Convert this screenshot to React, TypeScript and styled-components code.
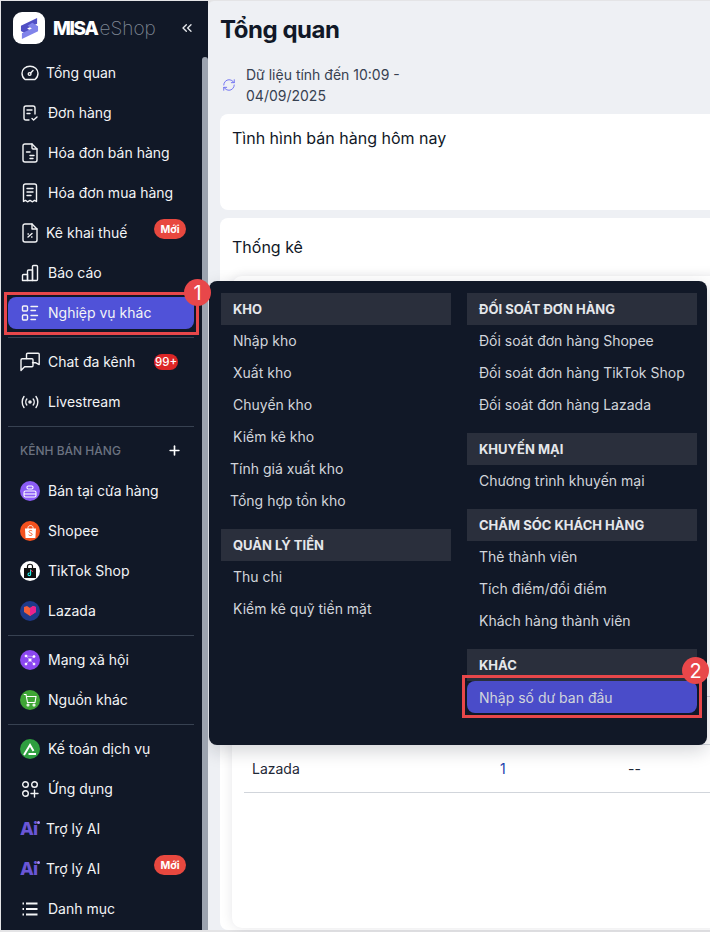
import React from 'react';
import styled, { createGlobalStyle } from 'styled-components';
import { ChevronsLeft, Plus, RefreshCw } from 'lucide-react';

const GlobalStyle = createGlobalStyle`
  html, body {
    margin: 0;
    padding: 0;
    background: #e4e4e6;
    font-family: Inter, "Noto Sans", sans-serif;
  }
  * { box-sizing: border-box; }
`;

const colors = {
  sidebar: '#111827',
  sidebarText: '#f3f4f6',
  line: '#374151',
  accent: '#5052d8',
  annotate: '#e8474a',
};

const Shell = styled.div`
  position: relative;
  width: 710px;
  height: 932px;
  padding: 1px 0 2px 1px;
  display: flex;
  overflow: hidden;
`;

const Sidebar = styled.aside`
  position: relative;
  z-index: 3;
  width: 207px;
  flex: none;
  display: flex;
  background: ${colors.sidebar};
`;

const Nav = styled.nav`
  width: 201px;
  flex: none;
  display: flex;
  flex-direction: column;
`;

const ScrollTrack = styled.div`
  width: 6px;
  padding-top: 56px;
  display: flex;
`;

const ScrollThumb = styled.div`
  flex: 1;
  background: #9ca3af;
  border-radius: 3px 3px 0 0;
`;

const Brand = styled.div`
  height: 52px;
  padding: 11px 7px 9px 12px;
  display: flex;
  align-items: center;
`;

const LogoTile = styled.div`
  width: 32px;
  height: 32px;
  border-radius: 9px;
  background: #fff;
  display: flex;
  align-items: center;
  justify-content: center;
`;

const Wordmark = styled.div`
  margin-left: 8px;
  flex: 1;
  display: flex;
  align-items: baseline;
`;

const WordBold = styled.span`
  font-size: 19px;
  font-weight: 800;
  letter-spacing: -1.4px;
  color: #fff;
`;

const WordLight = styled.span`
  margin-left: 2px;
  font-size: 19px;
  font-weight: 200;
  letter-spacing: 0;
  color: #7f8794;
`;

const CollapseButton = styled.div`
  display: flex;
  color: #e5e7eb;
`;

const Item = styled.div`
  position: relative;
  height: 40px;
  margin: 0 8px 0 7px;
  display: flex;
  align-items: center;
`;

const ItemBody = styled.div<{ $active?: boolean; $tight?: boolean }>`
  flex: 1;
  height: 32px;
  padding-left: 12px;
  display: flex;
  align-items: center;
  gap: ${(p) => (p.$tight ? '6px' : '8px')};
  border-radius: 8px;
  background: ${(p) => (p.$active ? colors.accent : 'transparent')};
  color: ${colors.sidebarText};
  font-size: 14px;
`;

const ItemLabel = styled.span`
  padding-bottom: 2px;
`;

const IconSlot = styled.span`
  width: 20px;
  height: 20px;
  flex: none;
  display: flex;
  align-items: center;
  justify-content: center;
  color: #f3f4f6;
`;

const ChannelDot = styled.span<{ $bg: string }>`
  width: 20px;
  height: 20px;
  border-radius: 50%;
  display: flex;
  align-items: center;
  justify-content: center;
  background: ${(p) => p.$bg};
`;

const AiMark = styled.span`
  position: relative;
  width: 20px;
  padding-bottom: 1px;
  font-size: 18px;
  line-height: 20px;
  font-weight: 800;
  letter-spacing: -0.8px;
  color: #6a56d6;
`;

const AiSpark = styled.i`
  position: absolute;
  top: 2px;
  right: 0;
  width: 3px;
  height: 3px;
  border-radius: 50%;
  background: #a78bfa;
`;

const PillBadge = styled.span<{ $count?: boolean }>`
  position: absolute;
  left: 146px;
  top: ${(p) => (p.$count ? '12px' : '6px')};
  width: ${(p) => (p.$count ? '24px' : '32px')};
  height: ${(p) => (p.$count ? '16px' : '20px')};
  border-radius: 10px;
  display: flex;
  align-items: center;
  justify-content: center;
  background: ${(p) => (p.$count ? '#dc2626' : '#e8483f')};
  color: #fff;
  font-size: ${(p) => (p.$count ? '11.5px' : '10.5px')};
  font-weight: ${(p) => (p.$count ? 500 : 700)};
`;

const Divider = styled.div`
  height: 1px;
  margin: 4px 8px 4px 7px;
  background: ${colors.line};
`;

const SectionLabel = styled.div`
  height: 40px;
  margin: 0 20px 0 19px;
  padding-bottom: 1px;
  display: flex;
  align-items: center;
  justify-content: space-between;
  font-size: 12px;
  font-weight: 500;
  color: #6b7280;
`;

const SectionPlus = styled.span`
  display: flex;
  color: #fff;
`;

const Callout = styled.div<{ $top: number; $bottom: number; $left: number; $right: number }>`
  position: absolute;
  top: ${(p) => p.$top}px;
  bottom: ${(p) => p.$bottom}px;
  left: ${(p) => p.$left}px;
  right: ${(p) => p.$right}px;
  border: 3px solid ${colors.annotate};
  pointer-events: none;
`;

const Marker = styled.div<{ $top: number; $right: number }>`
  position: absolute;
  z-index: 4;
  top: ${(p) => p.$top}px;
  right: ${(p) => p.$right}px;
  width: 27px;
  height: 27px;
  border-radius: 50%;
  display: flex;
  align-items: center;
  justify-content: center;
  background: ${colors.annotate};
  color: #fff;
  font-size: 20px;
`;

const Main = styled.main`
  position: relative;
  flex: 1;
  min-width: 0;
  padding: 13px 0 0 12px;
  display: flex;
  flex-direction: column;
  background: #eef0f4;
  border-top-left-radius: 6px;
`;

const PageTitle = styled.h1`
  margin: 0;
  font-size: 24px;
  line-height: 32px;
  font-weight: 700;
  letter-spacing: -0.45px;
  color: #111827;
`;

const SyncRow = styled.div`
  margin: 18px 0 8px;
  display: flex;
  align-items: center;
  gap: 10px;
  padding-left: 2px;
  color: #6366f1;
`;

const SyncText = styled.div`
  width: 170px;
  font-size: 14px;
  line-height: 21px;
  color: #374151;
`;

const Card = styled.section<{ $grow?: boolean }>`
  margin-right: -20px;
  margin-bottom: 8px;
  background: #fff;
  border-radius: 8px;
  padding: ${(p) => (p.$grow ? '17px 0 0 12px' : '12px')};
  ${(p) => (p.$grow ? 'flex: 1; margin-bottom: 0; display: flex; flex-direction: column; min-height: 0;' : 'height: 96px;')}
`;

const CardTitle = styled.h2`
  margin: 0;
  font-size: 16px;
  line-height: 24px;
  font-weight: 400;
  color: #111827;
`;

const InnerCard = styled.div`
  flex: 1;
  margin-top: 17px;
  margin-bottom: 2px;
  /* the table rows sit at the bottom, the popup covers the ones above */
  padding: 373px 0 0 12px;
  border-radius: 10px;
  background: #fff;
  box-shadow: 0 0 12px rgba(17, 24, 39, 0.1);
`;

const TableRow = styled.div`
  height: 48px;
  padding-left: 8px;
  display: grid;
  grid-template-columns: 248px 128px 1fr;
  align-items: center;
  border-bottom: 1px solid #d1d5db;
  font-size: 14px;
  color: #1f2937;
`;

const CountLink = styled.span`
  color: #1e40af;
`;

const Popup = styled.div`
  position: absolute;
  z-index: 2;
  left: 209px;
  top: 281px;
  width: 498px;
  height: 464px;
  padding: 12px;
  display: grid;
  grid-template-columns: 230px 230px;
  column-gap: 16px;
  align-items: start;
  background: #111827;
  border-radius: 8px;
  box-shadow: 0 6px 18px rgba(17, 24, 39, 0.18);
`;

const PopupColumn = styled.div`
  display: flex;
  flex-direction: column;
`;

const GroupHead = styled.div<{ $first?: boolean }>`
  height: 32px;
  margin-top: ${(p) => (p.$first ? 0 : '12px')};
  padding-left: 12px;
  display: flex;
  align-items: center;
  background: #2a2f3c;
  font-size: 13px;
  font-weight: 700;
  color: #e5e7eb;
`;

const GroupItem = styled.div<{ $active?: boolean; $nudge?: boolean }>`
  position: relative;
  height: 32px;
  padding-left: ${(p) => (p.$nudge ? '9px' : '12px')};
  padding-bottom: ${(p) => (p.$active ? 0 : '2px')};
  display: flex;
  align-items: center;
  font-size: 14px;
  color: #d1d5db;
  border-radius: 8px;
  background: ${(p) => (p.$active ? '#4a4cc9' : 'transparent')};
`;

const line = { fill: 'none', stroke: 'currentColor', strokeWidth: 1.4, strokeLinecap: 'round', strokeLinejoin: 'round' } as const;

const LogoS = () => (
  <svg width="19" height="23" viewBox="0 0 20 24">
    <path d="M18 1 L1 9 V14.5 L7 18 L12 15 L7.5 12 L18 7 Z" fill="#4f4fc4" />
    <path d="M2 23 L19 15 V9.5 L13 6 L8 9 L12.5 12 L2 17 Z" fill="#8083ea" />
  </svg>
);

const GaugeIcon = () => (
  <svg width="18" height="16" viewBox="0 0 18 16" {...line}>
    <path d="M4 14.5 C2.2 13.2 1 11 1 8.3 C1 4.4 4.5 1.2 9 1.2 C13.5 1.2 17 4.4 17 8.3 C17 11 15.8 13.2 14 14.5 Z" />
    <circle cx="8.6" cy="9" r="1.4" />
    <path d="M9.6 8 L12 5.6" />
  </svg>
);

const OrderIcon = () => (
  <svg width="18" height="18" viewBox="0 0 18 18" {...line}>
    <path d="M8 16 H5 C3.6 16 3 15.2 3 14 V4 C3 2.8 3.6 2 5 2 H12 C13.4 2 14 2.8 14 4 V10" />
    <path d="M6 6 H11 M6 9.5 H9" />
    <path d="M11 14.5 L12.6 16 L16 13" />
  </svg>
);

const SaleInvoiceIcon = () => (
  <svg width="18" height="20" viewBox="0 0 18 20" {...line}>
    <path d="M11 1 H4 C2.6 1 2 1.8 2 3 V17 C2 18.2 2.6 19 4 19 H14 C15.4 19 16 18.2 16 17 V6 Z" />
    <path d="M11 1 V5 C11 5.6 11.4 6 12 6 H16" />
    <path d="M5.5 9 H9 M9 12.5 H13 M9 15.5 H12" />
  </svg>
);

const BuyInvoiceIcon = () => (
  <svg width="16" height="20" viewBox="0 0 16 20" {...line}>
    <path d="M1.5 18.5 V3 C1.5 1.8 2.2 1 3.5 1 H12.5 C13.8 1 14.5 1.8 14.5 3 V18.5 L12.5 17.4 L10.5 18.8 L8 17.4 L5.5 18.8 L3.5 17.4 Z" />
    <path d="M5 5.5 H11 M5 9 H11 M5 12.5 H9" />
  </svg>
);

const TaxIcon = () => (
  <svg width="16" height="20" viewBox="0 0 16 20" {...line}>
    <path d="M10 1 H3 C1.8 1 1 1.8 1 3 V17 C1 18.2 1.8 19 3 19 H13 C14.2 19 15 18.2 15 17 V6 Z" />
    <path d="M10 1 V6 H15" />
    <path d="M6 14 L10 10.5 M6 11 H6.4 M9.6 14 H10" />
  </svg>
);

const ChartIcon = () => (
  <svg width="18" height="18" viewBox="0 0 18 18" {...line}>
    <path d="M1.5 16.5 V11.5 C1.5 10.8 2 10.5 2.5 10.5 H6.5 V16.5 Z" />
    <path d="M6.5 16.5 V7 C6.5 6.4 7 6 7.5 6 H11.5 V16.5 Z" />
    <path d="M11.5 16.5 V2.5 C11.5 1.9 12 1.5 12.5 1.5 H15.5 C16 1.5 16.5 1.9 16.5 2.5 V15.5 C16.5 16.1 16 16.5 15.5 16.5 Z" />
  </svg>
);

const ListBoxesIcon = () => (
  <svg width="18" height="18" viewBox="0 0 18 18" {...line}>
    <rect x="1.5" y="2" width="5" height="5" rx="1" />
    <rect x="1.5" y="11" width="5" height="5" rx="1" />
    <path d="M10 2.5 H16.5 M10 6.5 H14.5 M10 11.5 H16.5 M10 15.5 H14.5" />
  </svg>
);

const ChatIcon = () => (
  <svg width="20" height="20" viewBox="0 0 20 20" {...line}>
    <path d="M6.5 6.5 V2.5 C6.5 1.8 7 1.2 7.8 1.2 H18.2 C18.8 1.2 19.2 1.6 19.2 2.2 V12.6 L16 10.8 H12.5" />
    <path d="M1 8 C1 7.2 1.5 6.7 2.2 6.7 H12 C12.6 6.7 13 7.2 13 7.8 V13.6 C13 14.3 12.6 14.8 12 14.8 H4.6 L1 18.6 Z" />
  </svg>
);

const LiveIcon = () => (
  <svg width="18" height="14" viewBox="0 0 18 14" {...line}>
    <circle cx="9" cy="7" r="1.1" fill="currentColor" />
    <path d="M5.8 4 C4.5 5.6 4.5 8.4 5.8 10 M12.2 4 C13.5 5.6 13.5 8.4 12.2 10" />
    <path d="M3 1.5 C0.6 4.5 0.6 9.5 3 12.5 M15 1.5 C17.4 4.5 17.4 9.5 15 12.5" />
  </svg>
);

const AppsIcon = () => (
  <svg width="18" height="18" viewBox="0 0 18 18" {...line}>
    <circle cx="4.5" cy="4.5" r="2.8" />
    <circle cx="13.5" cy="4.5" r="2.8" />
    <circle cx="4.5" cy="13.5" r="2.8" />
    <path d="M13.5 10 V17 M10 13.5 H17" />
  </svg>
);

const MenuIcon = () => (
  <svg width="16" height="14" viewBox="0 0 16 14" fill="none" stroke="currentColor" strokeWidth="1.8">
    <path d="M4 1.5 H15.5 M4 7 H15.5 M4 12.5 H15.5" />
    <path d="M0.5 1.5 H2 M0.5 7 H2 M0.5 12.5 H2" />
  </svg>
);

const StoreGlyph = () => (
  <svg width="14" height="13" viewBox="0 0 14 13" fill="none" stroke="#fff" strokeWidth="1.1">
    <rect x="1" y="6" width="12" height="6" rx="1.5" />
    <path d="M1 9 H13" />
    <rect x="4" y="1" width="6" height="3" rx="1.2" />
  </svg>
);

const ShopeeGlyph = () => (
  <svg width="13" height="15" viewBox="0 0 13 15">
    <path d="M1 4.5 H12 L11.4 14 H1.6 Z" fill="#fff" />
    <path d="M4 5 V3.5 C4 1 9 1 9 3.5 V5" fill="none" stroke="#fff" strokeWidth="1" />
    <path d="M8.2 7 C7.4 6.2 5 6.2 5 7.6 C5 9.2 8.2 8.8 8.2 10.4 C8.2 11.8 5.6 11.8 4.6 10.8" fill="none" stroke="#f4511e" strokeWidth="0.9" />
  </svg>
);

const TikTokGlyph = () => (
  <svg width="14" height="16" viewBox="0 0 14 16">
    <path d="M1 5 H13 V15 H1 Z" fill="#111" />
    <path d="M4.5 5 V3.2 C4.5 0.6 9.5 0.6 9.5 3.2 V5" fill="none" stroke="#111" strokeWidth="1.2" />
    <path d="M7.6 6.6 V11.4 C7.6 13 5 13 5 11.4 C5 10.2 6 9.8 6.8 10" fill="none" stroke="#25f4ee" strokeWidth="1.1" />
    <path d="M7.8 6.8 C8.2 7.8 9 8.4 10 8.5" fill="none" stroke="#fe2c55" strokeWidth="1" />
  </svg>
);

const LazadaGlyph = () => (
  <svg width="14" height="12" viewBox="0 0 14 12">
    <path d="M1 2 L4 1 L7 3 L10 1 L13 2 V7 L7 11 L1 7 Z" fill="#f5603a" />
    <path d="M7 3 L10 1 L13 2 V7 L7 11 Z" fill="#e9218f" />
  </svg>
);

const SocialGlyph = () => (
  <svg width="14" height="14" viewBox="0 0 14 14" fill="#fff" stroke="#fff" strokeWidth="0.8">
    <path d="M3 3 L11 3.5 M3 3 L7 7 M11 3.5 L7 7 M7 7 L3 11 M7 7 L11 11" opacity="0.5" />
    <circle cx="3" cy="3" r="1" />
    <circle cx="11" cy="3.5" r="1" />
    <circle cx="7" cy="7" r="1.2" />
    <circle cx="3" cy="11" r="1" />
    <circle cx="11" cy="11" r="1" />
  </svg>
);

const CartGlyph = () => (
  <svg width="14" height="14" viewBox="0 0 14 14" fill="none" stroke="#fff" strokeWidth="1.1">
    <path d="M0.8 1.5 H3 L4.5 9.5 H12 L13 3.5 H3.4" />
    <circle cx="5" cy="12" r="1" />
    <circle cx="11" cy="12" r="1" />
  </svg>
);

const AccountingGlyph = () => (
  <svg width="14" height="13" viewBox="0 0 14 13" fill="none" stroke="#fff" strokeWidth="2">
    <path d="M1 12 L7 2 L10.5 8" />
    <path d="M5.5 11 H13" />
  </svg>
);

const AiIcon = () => (
  <AiMark>
    Ai
    <AiSpark />
  </AiMark>
);

type NavEntry = {
  label: string;
  icon: React.ReactNode;
  tight?: boolean;
  badge?: string;
};

const mainEntries: NavEntry[] = [
  { label: 'Tổng quan', icon: <GaugeIcon />, tight: true },
  { label: 'Đơn hàng', icon: <OrderIcon /> },
  { label: 'Hóa đơn bán hàng', icon: <SaleInvoiceIcon /> },
  { label: 'Hóa đơn mua hàng', icon: <BuyInvoiceIcon /> },
  { label: 'Kê khai thuế', icon: <TaxIcon />, tight: true, badge: 'Mới' },
  { label: 'Báo cáo', icon: <ChartIcon /> },
];

const chatEntries: NavEntry[] = [
  { label: 'Chat đa kênh', icon: <ChatIcon />, badge: '99+' },
  { label: 'Livestream', icon: <LiveIcon /> },
];

const channelEntries: NavEntry[] = [
  { label: 'Bán tại cửa hàng', icon: <ChannelDot $bg="#8b5cf6"><StoreGlyph /></ChannelDot> },
  { label: 'Shopee', icon: <ChannelDot $bg="#f4511e"><ShopeeGlyph /></ChannelDot> },
  { label: 'TikTok Shop', icon: <ChannelDot $bg="#ffffff"><TikTokGlyph /></ChannelDot> },
  { label: 'Lazada', icon: <ChannelDot $bg="#1e3a8a"><LazadaGlyph /></ChannelDot> },
];

const socialEntries: NavEntry[] = [
  { label: 'Mạng xã hội', icon: <ChannelDot $bg="#8b47f0"><SocialGlyph /></ChannelDot> },
  { label: 'Nguồn khác', icon: <ChannelDot $bg="#3fa535"><CartGlyph /></ChannelDot> },
];

const toolEntries: NavEntry[] = [
  { label: 'Kế toán dịch vụ', icon: <ChannelDot $bg="#2e9e3f"><AccountingGlyph /></ChannelDot> },
  { label: 'Ứng dụng', icon: <AppsIcon /> },
  { label: 'Trợ lý AI', icon: <AiIcon />, tight: true },
  { label: 'Trợ lý AI', icon: <AiIcon />, tight: true, badge: 'Mới' },
  { label: 'Danh mục', icon: <MenuIcon /> },
];

const NavRows: React.FC<{ entries: NavEntry[] }> = ({ entries }) => (
  <>
    {entries.map((entry, i) => (
      <Item key={i}>
        <ItemBody $tight={entry.tight}>
          <IconSlot>{entry.icon}</IconSlot>
          <ItemLabel>{entry.label}</ItemLabel>
        </ItemBody>
        {entry.badge && <PillBadge $count={entry.badge === '99+'}>{entry.badge}</PillBadge>}
      </Item>
    ))}
  </>
);

const App: React.FC = () => {
  return (
    <Shell>
      <GlobalStyle />
      <Sidebar>
        <Nav>
          <Brand>
            <LogoTile>
              <LogoS />
            </LogoTile>
            <Wordmark>
              <WordBold>MISA</WordBold>
              <WordLight>eShop</WordLight>
            </Wordmark>
            <CollapseButton>
              <ChevronsLeft size={16} strokeWidth={2} />
            </CollapseButton>
          </Brand>
          <NavRows entries={mainEntries} />
          <Item>
            <ItemBody $active>
              <IconSlot>
                <ListBoxesIcon />
              </IconSlot>
              <ItemLabel>Nghiệp vụ khác</ItemLabel>
            </ItemBody>
            <Callout $top={-1} $bottom={-2} $left={-4} $right={-5} />
            <Marker $top={-14} $right={-17}>1</Marker>
          </Item>
          <Divider />
          <NavRows entries={chatEntries} />
          <Divider />
          <SectionLabel>
            KÊNH BÁN HÀNG
            <SectionPlus>
              <Plus size={15} strokeWidth={2.6} />
            </SectionPlus>
          </SectionLabel>
          <NavRows entries={channelEntries} />
          <Divider />
          <NavRows entries={socialEntries} />
          <Divider />
          <NavRows entries={toolEntries} />
        </Nav>
        <ScrollTrack>
          <ScrollThumb />
        </ScrollTrack>
      </Sidebar>

      <Main>
        <PageTitle>Tổng quan</PageTitle>
        <SyncRow>
          <RefreshCw size={14} strokeWidth={1.5} />
          <SyncText>Dữ liệu tính đến 10:09 - 04/09/2025</SyncText>
        </SyncRow>
        <Card>
          <CardTitle>Tình hình bán hàng hôm nay</CardTitle>
        </Card>
        <Card $grow>
          <CardTitle>Thống kê</CardTitle>
          <InnerCard>
            <TableRow />
            <TableRow />
            <TableRow>
              <span>Lazada</span>
              <CountLink>1</CountLink>
              <span>--</span>
            </TableRow>
          </InnerCard>
        </Card>
      </Main>

      <Popup>
        <PopupColumn>
          <GroupHead $first>KHO</GroupHead>
          <GroupItem>Nhập kho</GroupItem>
          <GroupItem>Xuất kho</GroupItem>
          <GroupItem>Chuyển kho</GroupItem>
          <GroupItem>Kiểm kê kho</GroupItem>
          <GroupItem $nudge>Tính giá xuất kho</GroupItem>
          <GroupItem $nudge>Tổng hợp tồn kho</GroupItem>
          <GroupHead>QUẢN LÝ TIỀN</GroupHead>
          <GroupItem>Thu chi</GroupItem>
          <GroupItem>Kiểm kê quỹ tiền mặt</GroupItem>
        </PopupColumn>
        <PopupColumn>
          <GroupHead $first>ĐỐI SOÁT ĐƠN HÀNG</GroupHead>
          <GroupItem>Đối soát đơn hàng Shopee</GroupItem>
          <GroupItem>Đối soát đơn hàng TikTok Shop</GroupItem>
          <GroupItem>Đối soát đơn hàng Lazada</GroupItem>
          <GroupHead>KHUYẾN MẠI</GroupHead>
          <GroupItem>Chương trình khuyến mại</GroupItem>
          <GroupHead>CHĂM SÓC KHÁCH HÀNG</GroupHead>
          <GroupItem>Thẻ thành viên</GroupItem>
          <GroupItem>Tích điểm/đổi điểm</GroupItem>
          <GroupItem>Khách hàng thành viên</GroupItem>
          <GroupHead>KHÁC</GroupHead>
          <GroupItem $active>
            Nhập số dư ban đầu
            <Callout $top={-6} $bottom={-5} $left={-5} $right={-5} />
            <Marker $top={-24} $right={-12}>2</Marker>
          </GroupItem>
        </PopupColumn>
      </Popup>
    </Shell>
  );
};

export default App;
